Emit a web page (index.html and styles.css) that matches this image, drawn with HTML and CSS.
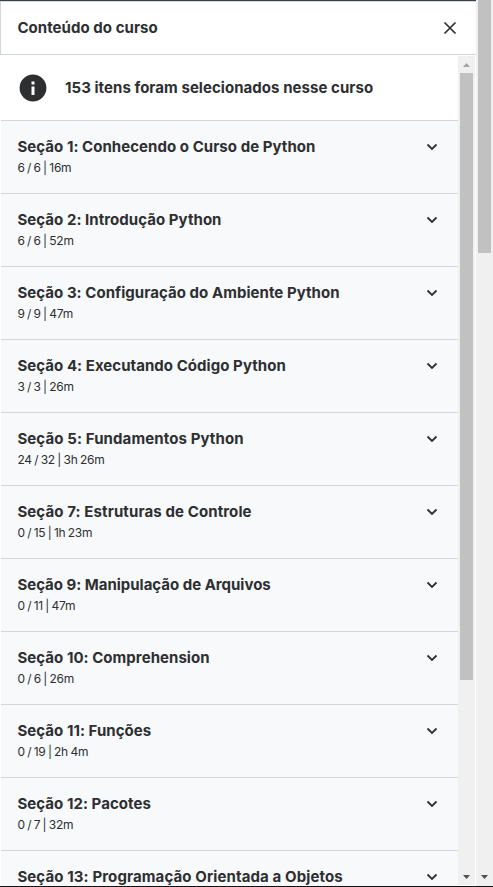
FILE: index.html
```html
<!DOCTYPE html>
<html lang="pt-BR">
<head>
<meta charset="utf-8">
<title>Conteúdo do curso</title>
<link rel="stylesheet" href="styles.css">
</head>
<body>
<div class="page">
  <main class="panel">
    <header class="header">
      <h1 class="title">Conteúdo do curso</h1>
      <svg class="close" viewBox="0 0 14 14"><path d="M1.500 1.500 12.500 12.500M12.500 1.500 1.500 12.500"/></svg>
    </header>
    <div class="body">
      <div class="content">
        <div class="notice">
          <svg class="info" viewBox="0 0 28 28"><circle cx="14" cy="14" r="13.4"/><path d="M12.500 7.500h3v3h-3zM12.500 12.500h3v8.500h-3z"/></svg>
          <p class="title notice-text">153 itens foram selecionados nesse curso</p>
        </div>
        <section class="row"><div><h2 class="title">Seção 1: Conhecendo o Curso de Python</h2><p class="meta">6 / 6 | 16m</p></div><svg class="chevron" viewBox="0 0 12 8"><path d="M1.500 1.500 6 5.900 10.500 1.500"/></svg></section>
        <section class="row"><div><h2 class="title">Seção 2: Introdução Python</h2><p class="meta">6 / 6 | 52m</p></div><svg class="chevron" viewBox="0 0 12 8"><path d="M1.500 1.500 6 5.900 10.500 1.500"/></svg></section>
        <section class="row"><div><h2 class="title">Seção 3: Configuração do Ambiente Python</h2><p class="meta">9 / 9 | 47m</p></div><svg class="chevron" viewBox="0 0 12 8"><path d="M1.500 1.500 6 5.900 10.500 1.500"/></svg></section>
        <section class="row"><div><h2 class="title">Seção 4: Executando Código Python</h2><p class="meta">3 / 3 | 26m</p></div><svg class="chevron" viewBox="0 0 12 8"><path d="M1.500 1.500 6 5.900 10.500 1.500"/></svg></section>
        <section class="row"><div><h2 class="title wide">Seção 5: Fundamentos Python</h2><p class="meta">24 / 32 | 3h 26m</p></div><svg class="chevron" viewBox="0 0 12 8"><path d="M1.500 1.500 6 5.900 10.500 1.500"/></svg></section>
        <section class="row"><div><h2 class="title wide">Seção 7: Estruturas de Controle</h2><p class="meta">0 / 15 | 1h 23m</p></div><svg class="chevron" viewBox="0 0 12 8"><path d="M1.500 1.500 6 5.900 10.500 1.500"/></svg></section>
        <section class="row"><div><h2 class="title tight">Seção 9: Manipulação de Arquivos</h2><p class="meta">0 / 11 | 47m</p></div><svg class="chevron" viewBox="0 0 12 8"><path d="M1.500 1.500 6 5.900 10.500 1.500"/></svg></section>
        <section class="row"><div><h2 class="title">Seção 10: Comprehension</h2><p class="meta">0 / 6 | 26m</p></div><svg class="chevron" viewBox="0 0 12 8"><path d="M1.500 1.500 6 5.900 10.500 1.500"/></svg></section>
        <section class="row"><div><h2 class="title">Seção 11: Funções</h2><p class="meta">0 / 19 | 2h 4m</p></div><svg class="chevron" viewBox="0 0 12 8"><path d="M1.500 1.500 6 5.900 10.500 1.500"/></svg></section>
        <section class="row"><div><h2 class="title">Seção 12: Pacotes</h2><p class="meta">0 / 7 | 32m</p></div><svg class="chevron" viewBox="0 0 12 8"><path d="M1.500 1.500 6 5.900 10.500 1.500"/></svg></section>
        <section class="row"><div><h2 class="title wide">Seção 13: Programação Orientada a Objetos</h2></div><svg class="chevron" viewBox="0 0 12 8"><path d="M1.500 1.500 6 5.900 10.500 1.500"/></svg></section>
      </div>
      <div class="scrollbar inner">
        <svg class="arrow up" viewBox="0 0 7 4"><path d="M0 4 3.500 0 7 4z"/></svg>
        <div class="thumb"></div>
        <svg class="arrow down" viewBox="0 0 7 4"><path d="M0 0 3.500 4 7 0z"/></svg>
      </div>
    </div>
  </main>
  <div class="scrollbar outer">
    <div class="thumb"></div>
    <svg class="arrow down" viewBox="0 0 7 4"><path d="M0 0 3.500 4 7 0z"/></svg>
  </div>
</div>
</body>
</html>
```
FILE: styles.css
```css
* { box-sizing: border-box; }
body, h1, h2, p { margin: 0; }
html, body { height: 100%; overflow: hidden; }
body { background: #fff; color: #2d2f31; font-family: Inter, "Liberation Sans", sans-serif; }
svg { display: block; flex: none; }

.page { display: flex; height: 887px; border-bottom: 1px solid #111; }
.panel { display: flex; flex-direction: column; width: 476px; border-top: 1px solid #3e4143; }
.header {
  display: flex; flex: none; align-items: center; justify-content: space-between;
  height: 54px; padding: 0 19px 0 16.4px;
  border: 1px solid #d1d7dc; border-right: 0;
}
.title { font-size: 15px; font-weight: 700; line-height: 20px; letter-spacing: 0.05px; white-space: nowrap; }
.title.wide { letter-spacing: 0.11px; }
.title.tight { letter-spacing: -0.01px; }
.close { width: 14px; height: 14px; fill: none; stroke: #2d2f31; stroke-width: 1.7; }

.body { display: flex; flex: 1; min-height: 0; padding-left: 1px; }
.content { width: 457px; overflow: hidden; background: #f8f9fb; }
.notice { display: flex; align-items: center; height: 66px; padding-left: 18px; background: #fff; border-bottom: 1px solid #d1d7dc; }
.info { width: 28px; height: 28px; fill: #2d2f31; }
.info path { fill: #fff; }
.notice-text { margin-left: 18px; }
.row {
  display: flex; justify-content: space-between; height: 73px;
  padding: 16px 20px 0 16.4px; border-bottom: 1px solid #d1d7dc;
}
.meta { margin-top: 3px; font-size: 12px; line-height: 16px; letter-spacing: -0.25px; word-spacing: -0.7px; white-space: nowrap; }
.chevron { width: 12px; height: 8px; margin-top: 6px; fill: none; stroke: #2d2f31; stroke-width: 1.8; }

.scrollbar { display: flex; flex-direction: column; align-items: center; background: #f0f0f0; }
.thumb { width: 13px; background: #c1c1c1; }
.arrow { width: 7px; height: 4px; fill: #505050; }
.arrow.up { fill: #a3a3a3; }
.arrow.down { margin-top: auto; }
.inner { width: 17px; margin: 1px 1px 1px 0; padding: 7px 0 6px; }
.inner .thumb { height: 607px; margin-top: 6px; }
.outer { width: 17px; padding-bottom: 7px; }
.outer .thumb { height: 253px; }
```
